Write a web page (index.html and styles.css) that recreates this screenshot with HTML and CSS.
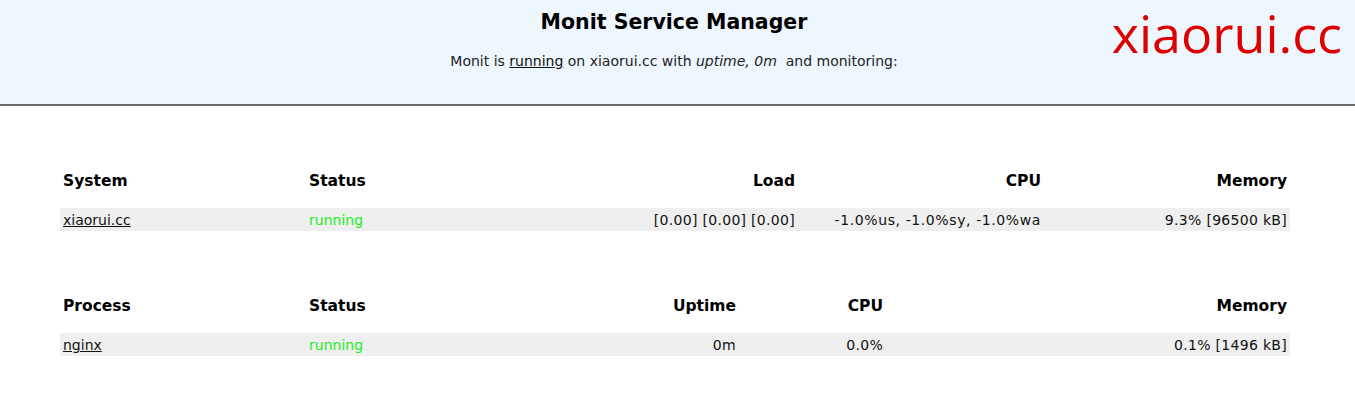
FILE: index.html
```html
<!DOCTYPE html>
<html lang="en">
<head>
<meta charset="utf-8">
<title>Monit Service Manager</title>
<link rel="stylesheet" href="styles.css">
</head>
<body>
<header class="top">
  <div class="intro">
    <h1 class="title">Monit Service Manager</h1>
    <p class="sub">Monit is <a href="#">running</a> on xiaorui.cc with <i>uptime, 0m</i>&nbsp; and monitoring:</p>
  </div>
  <div class="brand">xiaorui.cc</div>
</header>
<main class="main">
  <section class="tbl sys">
    <div class="cell th">System</div>
    <div class="cell th">Status</div>
    <div class="cell th r">Load</div>
    <div class="cell th r">CPU</div>
    <div class="cell th r">Memory</div>
    <div class="cell td"><a href="#">xiaorui.cc</a></div>
    <div class="cell td ok">running</div>
    <div class="cell td r num">[0.00]&nbsp;[0.00]&nbsp;[0.00]</div>
    <div class="cell td r num wide">-1.0%us,&nbsp;-1.0%sy,&nbsp;-1.0%wa</div>
    <div class="cell td r num">9.3% [96500&nbsp;kB]</div>
  </section>
  <section class="tbl proc">
    <div class="cell th">Process</div>
    <div class="cell th">Status</div>
    <div class="cell th r">Uptime</div>
    <div class="cell th r">CPU</div>
    <div class="cell th r">Memory</div>
    <div class="cell td"><a href="#">nginx</a></div>
    <div class="cell td ok">running</div>
    <div class="cell td r num">0m</div>
    <div class="cell td r num">0.0%</div>
    <div class="cell td r num">0.1% [1496&nbsp;kB]</div>
  </section>
</main>
</body>
</html>
```
FILE: styles.css
```css
* { box-sizing: border-box; }
html, body { margin: 0; padding: 0; background: #fff; }
body {
  font-family: "DejaVu Sans", Verdana, sans-serif;
  font-size: 14px;
  color: #111;
}
a { color: #111; text-decoration: underline; }

.top {
  display: grid;
  grid-template-columns: 1fr;
  grid-template-rows: 1fr;
  height: 106px;
  background: #eef6fe;
  border-bottom: 2px solid #6a6a6a;
}
.intro {
  grid-area: 1 / 1;
  text-align: center;
  padding: 9px 7px 0 0;
}
.title {
  margin: 0;
  font-size: 20.5px;
  line-height: 27px;
  font-weight: bold;
  color: #000;
}
.sub {
  margin: 16px 0 0;
  line-height: 18px;
  color: #222;
}
.brand {
  grid-area: 1 / 1;
  justify-self: end;
  align-self: start;
  margin: 1px 8px 0 0;
  padding: 0 5px;
  font-family: "Open Sans", "Noto Sans", sans-serif;
  font-size: 52px;
  line-height: 64px;
  white-space: nowrap;
  color: #dd0000;
}

.main { padding: 65px 0 0 60px; }
.tbl {
  display: grid;
  width: 1230px;
  margin-bottom: 65px;
}
.sys { grid-template-columns: 246px 246px 246px 246px 246px; }
.proc { grid-template-columns: 246px 246px 187px 147px 404px; }

.cell { padding: 0 3px; white-space: nowrap; }
.r { text-align: right; }
.th {
  font-weight: bold;
  font-size: 15.5px;
  line-height: 20px;
  color: #000;
  margin-bottom: 17px;
}
.td {
  background: #efefef;
  line-height: 22px;
  height: 23px;
  padding-top: 1px;
}
.num { letter-spacing: 0.3px; }
.num.wide { letter-spacing: 0.6px; }
.ok { color: #22ee22; }
```
